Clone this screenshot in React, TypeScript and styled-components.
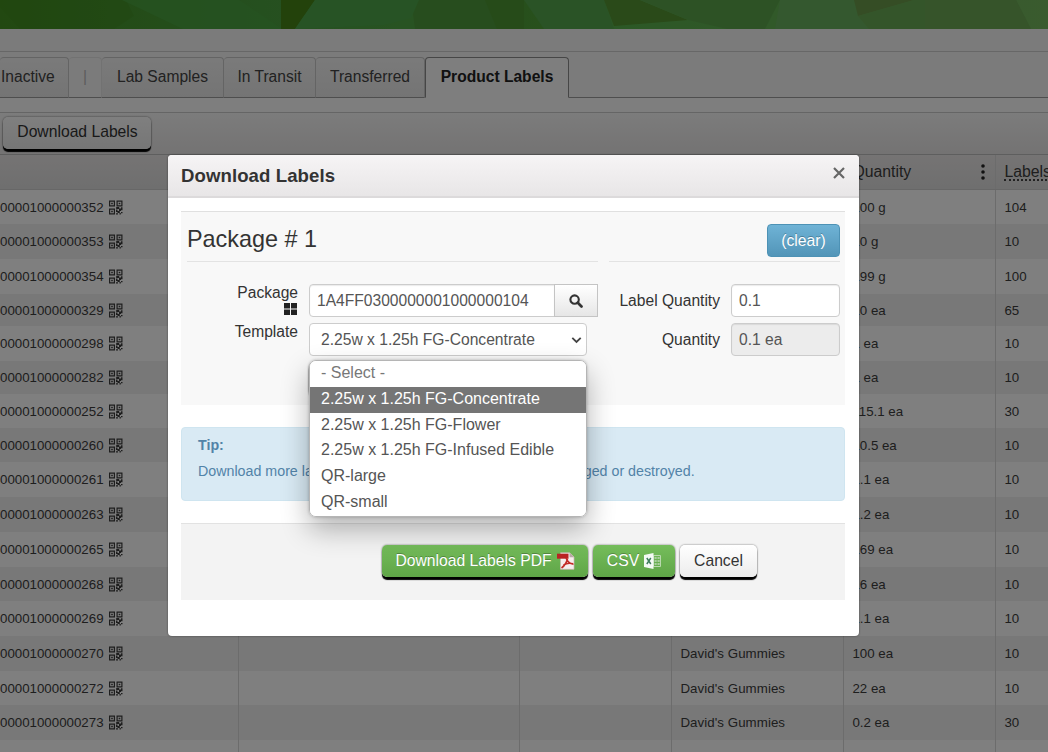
import React from 'react';
import styled, { createGlobalStyle } from 'styled-components';

const GlobalStyle = createGlobalStyle`
  * {
    box-sizing: border-box;
  }

  body {
    margin: 0;
    overflow: hidden;
    color: #333;
    font-family: 'Liberation Sans', Arial, sans-serif;
    font-size: 16px;
  }
`;

const PageDiv = styled.div`
  position: relative;
  width: 1048px;
  height: 752px;
  overflow: hidden;
  background-color: #f7f7f7;
`;

const BannerSvg = styled.svg`
  display: block;
  width: 1048px;
  height: 29px;
`;

const SpacerDiv = styled.div`
  height: 23px;
  border-bottom: 1px solid #cfcfcf;
`;

const TabsDiv = styled.div`
  display: flex;
  height: 46px;
  padding-top: 5px;
`;

const TabDiv = styled.div<{ $width: number; $active?: boolean; $muted?: boolean }>`
  width: ${({ $width }) => $width}px;
  flex: none;
  height: 41px;
  padding-top: 10px;
  border: 1px solid ${({ $active, $muted }) => ($active ? '#8c8c8c' : $muted ? '#e4e4e4' : '#c8c8c8')};
  border-left-width: ${({ $active }) => ($active ? 1 : 0)}px;
  border-bottom-color: ${({ $active }) => ($active ? '#fcfcfc' : '#9c9c9c')};
  border-radius: 4px 4px 0 0;
  background: ${({ $active, $muted }) => ($active ? '#fcfcfc' : $muted ? '#f6f6f6' : 'linear-gradient(#f5f5f5, #e9e9e9)')};
  color: ${({ $active, $muted }) => ($active ? '#222' : $muted ? '#bbb' : '#444')};
  font-size: 15.6px;
  font-weight: ${({ $active }) => ($active ? 700 : 400)};
  line-height: 18px;
  text-align: center;
  white-space: nowrap;
`;

const FirstTabDiv = styled(TabDiv)`
  padding-left: 1px;
  text-align: left;
`;

const TabFillDiv = styled.div`
  flex: 1;
  border-bottom: 1px solid #9c9c9c;
`;

const GridPanelDiv = styled.div`
  padding-top: 14px;
  background-color: #fcfcfc;
`;

const ToolbarDiv = styled.div`
  height: 43px;
  padding: 4px 3px;
  border-top: 1px solid #cacaca;
  border-bottom: 1px solid #bdbdbd;
  background: linear-gradient(#f8f8f8, #e8e6e6);
`;

const RaisedButton = styled.button<{ $width: number; $green?: boolean }>`
  display: flex;
  align-items: center;
  justify-content: center;
  gap: 5px;
  width: ${({ $width }) => $width}px;
  height: 32px;
  padding: 0;
  border: 0;
  border-radius: 5px;
  background: ${({ $green }) => ($green ? 'linear-gradient(#75bd5b, #5fa547)' : 'linear-gradient(#fff, #ececec)')};
  box-shadow: 0 3px 1px #000, 0 0 2px rgba(0, 0, 0, 0.6);
  color: ${({ $green }) => ($green ? '#fff' : '#333')};
  font-family: inherit;
  font-size: 15.7px;
  white-space: nowrap;
  ${({ $green }) => $green && 'text-shadow: 0 -1px 0 rgba(0, 0, 0, 0.25);'}
`;

const ToolbarButton = styled(RaisedButton)`
  padding: 0 0 3px 1px;
`;

const RowDiv = styled.div<{ $height: number; $alt?: boolean }>`
  display: grid;
  grid-template-columns: 239px 281px 152px 172px 152px 53px;
  height: ${({ $height }) => $height}px;
  background-color: ${({ $alt }) => ($alt ? '#f0f0f0' : '#fff')};
  color: #3c3c3c;
  font-size: 13.3px;
`;

const HeaderRowDiv = styled(RowDiv)`
  border-bottom: 1px solid #cfcfcf;
  background: linear-gradient(#ebe8e8, #dedede);
  font-size: 15.8px;
`;

const CellDiv = styled.div`
  display: flex;
  align-items: center;
  padding-left: 8.4px;
  border-right: 1px solid #d8d8d8;
  white-space: nowrap;
`;

const PackageCellDiv = styled(CellDiv)`
  gap: 5px;
  padding-left: 0;
`;

const ItemCellDiv = styled(CellDiv)`
  letter-spacing: 0.06px;
`;

const QuantityHeaderDiv = styled(CellDiv)`
  justify-content: space-between;
  padding-right: 10px;
`;

const DottedSpan = styled.span`
  border-bottom: 2px dotted #444;
  line-height: 15px;
`;

const BackdropDiv = styled.div`
  position: absolute;
  inset: 0;
  padding: 155px 0 0 168px;
  background-color: rgba(0, 0, 0, 0.5);
`;

const ModalDiv = styled.div`
  width: 691px;
  height: 481px;
  border-radius: 4px;
  background-color: #fff;
  box-shadow: 0 0 2px rgba(0, 0, 0, 0.5);
`;

const ModalHeaderDiv = styled.div`
  display: flex;
  align-items: center;
  justify-content: space-between;
  height: 43px;
  padding: 0 14px 0 13px;
  border-bottom: 2px solid #dcdadb;
  border-radius: 4px 4px 0 0;
  background: linear-gradient(#f6f4f5, #e8e6e7);
`;

const TitleSpan = styled.span`
  font-size: 18.6px;
  font-weight: 700;
  letter-spacing: 0.08px;
`;

const ModalBodyDiv = styled.div`
  display: flex;
  flex-direction: column;
  gap: 22px;
  padding: 13px 14px 0 13px;
`;

const PackageSectionDiv = styled.div`
  display: grid;
  grid-template-columns: 411px 231px;
  column-gap: 11px;
  align-content: start;
  height: 194px;
  padding: 0 5px 0 6px;
  border-top: 1px solid #e0e0e0;
  background-color: #f8f8f8;
`;

const LegendDiv = styled.div<{ $end?: boolean }>`
  display: flex;
  justify-content: ${({ $end }) => ($end ? 'flex-end' : 'flex-start')};
  height: 50px;
  padding-top: 12px;
  border-bottom: 1px solid #e3e3e3;
  font-size: 23.4px;
  line-height: 30px;
`;

const ClearButton = styled.button`
  width: 73px;
  height: 33px;
  border: 1px solid #4d92b5;
  border-radius: 4px;
  background: linear-gradient(#6fb3d6, #5295b8);
  color: #fff;
  font-family: inherit;
  font-size: 15.7px;
  text-shadow: 0 -1px 0 rgba(0, 0, 0, 0.25);
`;

const FieldsDiv = styled.div<{ $labelWidth: number }>`
  display: grid;
  grid-template-columns: ${({ $labelWidth }) => $labelWidth}px 1fr;
  grid-template-rows: 33px 33px 33px;
  gap: 6px 11px;
  padding-top: 22px;
`;

const LabelDiv = styled.div<{ $top: number }>`
  display: flex;
  flex-direction: column;
  align-items: flex-end;
  padding-top: ${({ $top }) => $top}px;
  font-size: 15.6px;
  line-height: 18px;
  white-space: nowrap;
`;

const InputGroupDiv = styled.div`
  display: flex;
`;

const FieldDiv = styled.div<{ $width: number; $disabled?: boolean; $joined?: boolean }>`
  width: ${({ $width }) => $width}px;
  height: 33px;
  padding-left: 7px;
  border: 1px solid #ccc;
  border-radius: ${({ $joined }) => ($joined ? '4px 0 0 4px' : '4px')};
  background-color: ${({ $disabled }) => ($disabled ? '#ececec' : '#fff')};
  box-shadow: inset 0 1px 1px rgba(0, 0, 0, 0.08);
  color: #555;
  font-size: 15.6px;
  line-height: 31px;
  white-space: nowrap;
`;

const SearchButton = styled.button`
  display: flex;
  align-items: center;
  justify-content: center;
  width: 44px;
  height: 33px;
  margin-left: -1px;
  padding: 0;
  border: 1px solid #c4c4c4;
  background: linear-gradient(#fff, #e6e6e6);
`;

const SelectDiv = styled.div`
  position: relative;
  display: flex;
  align-items: center;
  justify-content: space-between;
  width: 278px;
  height: 33px;
  padding: 0 4px 0 11px;
  border: 1px solid #ccc;
  border-radius: 4px;
  background-color: #fff;
  color: #555;
  font-size: 15.65px;
  white-space: nowrap;
`;

const MenuDiv = styled.div`
  position: absolute;
  z-index: 1;
  top: 36px;
  left: -1px;
  width: 278px;
  height: 157px;
  overflow: hidden;
  border: 1px solid #b5b5b5;
  border-radius: 7px;
  background-color: #fff;
  font-size: 16px;
`;

const MenuShadowDiv = styled.div`
  position: absolute;
  top: 36px;
  left: -1px;
  width: 278px;
  height: 157px;
  border-radius: 7px;
  box-shadow: 0 12px 28px rgba(0, 0, 0, 0.3), 0 0 3px rgba(0, 0, 0, 0.25);
`;

const OptionDiv = styled.div<{ $selected?: boolean; $muted?: boolean }>`
  height: 25.8px;
  padding-left: 11px;
  background-color: ${({ $selected }) => ($selected ? '#757575' : '#fff')};
  color: ${({ $selected, $muted }) => ($selected ? '#fff' : $muted ? '#777' : '#555')};
  line-height: 24px;
`;

const AddButton = styled(RaisedButton)`
  grid-column: 2;
  margin-top: 1px;
`;

const TipDiv = styled.div`
  height: 74px;
  padding: 9px 16px;
  border: 1px solid #cfe5f0;
  border-radius: 4px;
  background-color: #d9eaf4;
  color: #5283a8;
  font-size: 14.25px;
  line-height: 17px;
  white-space: nowrap;
`;

const TipTextDiv = styled.div`
  margin-top: 9px;
`;

const FooterDiv = styled.div`
  display: flex;
  gap: 5px;
  height: 77px;
  padding: 21px 0 0 201px;
  border-top: 1px solid #e2e2e2;
  background-color: #f3f3f3;
`;

interface PackageRow {
  tag: string;
  height: number;
  item?: string;
  quantity: string;
  labels: string;
}

const rows: PackageRow[] = [
  { tag: '00001000000352', height: 34, quantity: '100 g', labels: '104' },
  { tag: '00001000000353', height: 35, quantity: '10 g', labels: '10' },
  { tag: '00001000000354', height: 35, quantity: '199 g', labels: '100' },
  { tag: '00001000000329', height: 32, quantity: '10 ea', labels: '65' },
  { tag: '00001000000298', height: 35, quantity: '1 ea', labels: '10' },
  { tag: '00001000000282', height: 33, quantity: '1 ea', labels: '10' },
  { tag: '00001000000252', height: 34, quantity: '115.1 ea', labels: '30' },
  { tag: '00001000000260', height: 34, quantity: '10.5 ea', labels: '10' },
  { tag: '00001000000261', height: 35, quantity: '1.1 ea', labels: '10' },
  { tag: '00001000000263', height: 35, quantity: '1.2 ea', labels: '10' },
  { tag: '00001000000265', height: 35, quantity: '169 ea', labels: '10' },
  { tag: '00001000000268', height: 34, quantity: '16 ea', labels: '10' },
  { tag: '00001000000269', height: 35, quantity: '1.1 ea', labels: '10' },
  { tag: '00001000000270', height: 35, item: "David's Gummies", quantity: '100 ea', labels: '10' },
  { tag: '00001000000272', height: 34, item: "David's Gummies", quantity: '22 ea', labels: '10' },
  { tag: '00001000000273', height: 35, item: "David's Gummies", quantity: '0.2 ea', labels: '30' },
];

const options = [
  '- Select -',
  '2.25w x 1.25h FG-Concentrate',
  '2.25w x 1.25h FG-Flower',
  '2.25w x 1.25h FG-Infused Edible',
  'QR-large',
  'QR-small',
];

const Banner = () => (
  <BannerSvg viewBox="0 0 1048 29" preserveAspectRatio="none">
    <defs>
      <linearGradient id="banner">
        <stop offset="0" stopColor="#449122" />
        <stop offset="0.25" stopColor="#4ba03f" />
        <stop offset="0.6" stopColor="#59b04d" />
        <stop offset="1" stopColor="#74b65d" />
      </linearGradient>
    </defs>
    <path fill="url(#banner)" d="M0 0h1048v29H0z" />
    <path fill="#408819" d="M0 0h126l8 16-20 13H20L0 7z" opacity=".3" />
    <path fill="#4ba543" d="M122 0h117l43 29H183z" opacity=".7" />
    <path fill="#478417" d="M281 0h34l-20 29h-14z" />
    <path fill="#4ea74b" d="M315 0h104l-8 18-27 7-89 4z" />
    <path fill="#4f9a3c" d="M419 0h105v29H415l-2-15z" />
    <path fill="#4a9428" d="M485 0h40l20 29h-48z" opacity=".5" />
    <path fill="#54a64c" d="M524 0h80l10 29h-70z" />
    <path fill="#549432" d="M604 0h36l48 20-74 6z" />
    <path fill="#5ba54b" d="M640 0h140l-15 29h-38l-39-9z" />
    <path fill="#69b15e" d="M780 0h74l5 15 10 14h-94z" />
    <path fill="#6a9a4a" d="M854 0h60l-56 16z" />
    <path fill="#69aa55" d="M914 0h102l15 29H869l-11-13z" />
    <path fill="#70a555" d="M925 0h91l15 29H925z" opacity=".5" />
  </BannerSvg>
);

const QrIcon = () => (
  <svg width="14" height="15" viewBox="0 0 14 15" fill="#3c3c3c">
    <path
      fillRule="evenodd"
      d="M0 .5h6v6H0zM1.200 1.700v3.600h3.600V1.700zM7.500.5h6v6h-6zM8.700 1.700v3.600h3.600V1.700zM0 8.500h6v6H0zM1.200 9.700v3.600h3.600V9.700z"
    />
    <path d="M2.200 2.700h1.600v1.600H2.200zM9.700 2.700h1.600v1.600H9.700zM2.200 10.700h1.600v1.600H2.200zM7.200 7h3v2h-3zM10 8.500h2V11h-2zM12 7.200h1.500v3H12zM7 9.500h1.500V12H7zM8.500 11h2.300v2H8.500zM12 12h1.500v1.200H12zM7 13.300h2v1.200H7zM10.500 13h1.300v1.500h-1.300z" />
  </svg>
);

const MoreIcon = () => (
  <svg width="4" height="16" viewBox="0 0 4 16" fill="#222">
    <circle cx="2" cy="2" r="1.8" />
    <circle cx="2" cy="8" r="1.8" />
    <circle cx="2" cy="14" r="1.8" />
  </svg>
);

const CloseSvg = styled.svg`
  margin-top: -5px;
`;

const CloseIcon = () => (
  <CloseSvg width="12" height="12" viewBox="0 0 12 12" stroke="#666" strokeWidth="2.2">
    <path d="M1 1l10 10M11 1L1 11" />
  </CloseSvg>
);

const TilesSvg = styled.svg`
  margin: 1px 1px 0 0;
`;

const TilesIcon = () => (
  <TilesSvg width="13" height="12" viewBox="0 0 13 12" fill="#222">
    <path d="M0 0h6v5.400H0zM7 0h6v5.400H7zM0 6.600h6V12H0zM7 6.600h6V12H7z" />
  </TilesSvg>
);

const SearchIcon = () => (
  <svg width="14" height="14" viewBox="0 0 14 14" fill="none" stroke="#333">
    <circle cx="5.6" cy="5.6" r="4.2" strokeWidth="2.1" />
    <path d="M8.800 8.800l3.700 3.700" strokeWidth="2.7" strokeLinecap="round" />
  </svg>
);

const ChevronIcon = () => (
  <svg width="11" height="8" viewBox="0 0 11 8" fill="none" stroke="#444" strokeWidth="1.8">
    <path d="M1.300 1.800l4.200 4.200 4.200-4.200" />
  </svg>
);

const PdfIcon = () => (
  <svg width="18" height="18" viewBox="0 0 18 18">
    <path fill="#f6eeee" stroke="#c9b6b2" strokeWidth=".7" d="M3.500.8h9.200L17 5v12.300H3.500z" />
    <path fill="#b9a9a6" d="M12.500.8v4.400H17z" />
    <path fill="#bb2423" d="M0 1.700h11.500v5H0z" />
    <path
      fill="none"
      stroke="#c32c27"
      strokeWidth="1.6"
      d="M9 6c1.200 3 3.400 5.800 7.500 6.300M10.500 6.500C9.800 10 8 13.500 4.500 16M6.500 13c2.500-1.600 6-2.300 9.500-1.300"
    />
  </svg>
);

const ExcelIcon = () => (
  <svg width="17" height="16" viewBox="0 0 17 16">
    <path fill="none" stroke="#b9d9ae" strokeWidth="1" d="M9.500 2.500h7v11h-7z" />
    <path fill="#a9cf9e" d="M10.500 4h2.200v2h-2.200zM13.500 4h2.200v2h-2.200zM10.500 7h2.200v2h-2.200zM13.500 7h2.200v2h-2.200zM10.500 10h2.200v2h-2.200zM13.500 10h2.200v2h-2.200z" />
    <path fill="#f4faf4" d="M0 2l9.500-2v16L0 14z" />
    <path fill="none" stroke="#3f7d5c" strokeWidth="1.5" d="M2.800 5l4 6M6.800 5l-4 6" />
  </svg>
);

const PackageGrid = React.memo(() => (
  <div>
    <HeaderRowDiv $height={35}>
      <CellDiv />
      <CellDiv />
      <CellDiv />
      <CellDiv />
      <QuantityHeaderDiv>
        Quantity
        <MoreIcon />
      </QuantityHeaderDiv>
      <CellDiv>
        <DottedSpan>Labels</DottedSpan>
      </CellDiv>
    </HeaderRowDiv>
    {rows.map((row, i) => (
      <RowDiv key={row.tag} $height={row.height} $alt={i % 2 === 1}>
        <PackageCellDiv>
          {row.tag}
          <QrIcon />
        </PackageCellDiv>
        <CellDiv />
        <CellDiv />
        <ItemCellDiv>{row.item}</ItemCellDiv>
        <CellDiv>{row.quantity}</CellDiv>
        <CellDiv>{row.labels}</CellDiv>
      </RowDiv>
    ))}
    <RowDiv $height={35}>
      <CellDiv />
      <CellDiv />
      <CellDiv />
      <CellDiv />
      <CellDiv />
      <CellDiv />
    </RowDiv>
  </div>
));

const TemplateSelect = () => (
  <SelectDiv>
    {options[1]}
    <ChevronIcon />
    <MenuShadowDiv />
    <MenuDiv>
      {options.map((option, i) => (
        <OptionDiv key={option} $selected={i === 1} $muted={i === 0}>
          {option}
        </OptionDiv>
      ))}
    </MenuDiv>
  </SelectDiv>
);

const DownloadLabelsModal = () => (
  <ModalDiv>
    <ModalHeaderDiv>
      <TitleSpan>Download Labels</TitleSpan>
      <CloseIcon />
    </ModalHeaderDiv>
    <ModalBodyDiv>
      <PackageSectionDiv>
        <LegendDiv>Package # 1</LegendDiv>
        <LegendDiv $end>
          <ClearButton>(clear)</ClearButton>
        </LegendDiv>
        <FieldsDiv $labelWidth={111}>
          <LabelDiv $top={0}>
            Package
            <TilesIcon />
          </LabelDiv>
          <InputGroupDiv>
            <FieldDiv $width={246} $joined>
              1A4FF0300000001000000104
            </FieldDiv>
            <SearchButton>
              <SearchIcon />
            </SearchButton>
          </InputGroupDiv>
          <LabelDiv $top={0}>Template</LabelDiv>
          <TemplateSelect />
          <AddButton $width={140} />
        </FieldsDiv>
        <FieldsDiv $labelWidth={111}>
          <LabelDiv $top={8}>Label Quantity</LabelDiv>
          <FieldDiv $width={109}>0.1</FieldDiv>
          <LabelDiv $top={8}>Quantity</LabelDiv>
          <FieldDiv $width={109} $disabled>
            0.1 ea
          </FieldDiv>
        </FieldsDiv>
      </PackageSectionDiv>
      <TipDiv>
        <b>Tip:</b>
        <TipTextDiv>Download more labels when earlier package labels are damaged or destroyed.</TipTextDiv>
      </TipDiv>
      <FooterDiv>
        <RaisedButton $width={206} $green>
          Download Labels PDF
          <PdfIcon />
        </RaisedButton>
        <RaisedButton $width={82} $green>
          CSV
          <ExcelIcon />
        </RaisedButton>
        <RaisedButton $width={77}>Cancel</RaisedButton>
      </FooterDiv>
    </ModalBodyDiv>
  </ModalDiv>
);

const App = () => (
  <PageDiv>
    <GlobalStyle />
    <Banner />
    <SpacerDiv />
    <TabsDiv>
      <FirstTabDiv $width={69}>Inactive</FirstTabDiv>
      <TabDiv $width={33} $muted>
        |
      </TabDiv>
      <TabDiv $width={122}>Lab Samples</TabDiv>
      <TabDiv $width={92}>In Transit</TabDiv>
      <TabDiv $width={109}>Transferred</TabDiv>
      <TabDiv $width={144} $active>
        Product Labels
      </TabDiv>
      <TabFillDiv />
    </TabsDiv>
    <GridPanelDiv>
      <ToolbarDiv>
        <ToolbarButton $width={148}>Download Labels</ToolbarButton>
      </ToolbarDiv>
      <PackageGrid />
    </GridPanelDiv>
    <BackdropDiv>
      <DownloadLabelsModal />
    </BackdropDiv>
  </PageDiv>
);

export default App;
